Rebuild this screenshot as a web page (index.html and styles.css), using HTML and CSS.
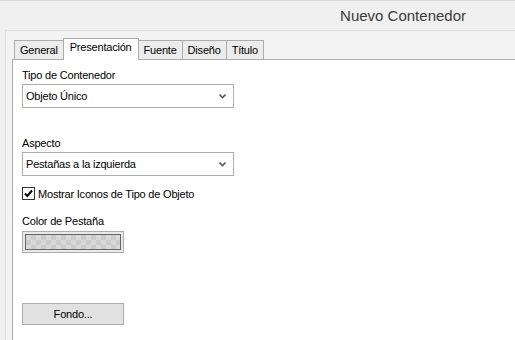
FILE: index.html
```html
<!DOCTYPE html>
<html lang="es">
<head>
    <meta charset="UTF-8">
    <title>Nuevo Contenedor</title>
    <link rel="stylesheet" href="styles.css">
</head>
<body>
    <div class="dialog">
        <div class="dialog-title">Nuevo Contenedor</div>

        <div class="panel">
            <div class="tabs">
                <span class="tab">General</span>
                <span class="tab tab-active">Presentación</span>
                <span class="tab">Fuente</span>
                <span class="tab">Diseño</span>
                <span class="tab">Título</span>
            </div>

            <div class="tabpage">
                <div class="label">Tipo de Contenedor</div>
                <div class="select">
                    <span>Objeto Único</span>
                    <svg class="chevron" width="7" height="5" viewBox="0 0 7 5">
                        <path d="M0.5 0.5 L3.5 3.5 L6.5 0.5" fill="none" stroke="#5f5f5f" stroke-width="1.6"/>
                    </svg>
                </div>

                <div class="label label-aspecto">Aspecto</div>
                <div class="select">
                    <span>Pestañas a la izquierda</span>
                    <svg class="chevron" width="7" height="5" viewBox="0 0 7 5">
                        <path d="M0.5 0.5 L3.5 3.5 L6.5 0.5" fill="none" stroke="#5f5f5f" stroke-width="1.6"/>
                    </svg>
                </div>

                <label class="check">
                    <span class="checkbox">
                        <svg width="11" height="11" viewBox="0 0 11 11">
                            <path d="M2 5.5 L4.3 8 L9 2.5" fill="none" stroke="#000" stroke-width="2"/>
                        </svg>
                    </span>
                    Mostrar Iconos de Tipo de Objeto
                </label>

                <div class="label label-color">Color de Pestaña</div>
                <div class="swatch">
                    <div class="swatch-inner"></div>
                </div>

                <div class="button">Fondo...</div>
            </div>
        </div>
    </div>
</body>
</html>
```

FILE: styles.css
```css
body {
    margin: 0;
    background-color: #f0f0f0;
    font-family: "Liberation Sans", Arial, sans-serif;
    font-size: 11px;
    letter-spacing: -0.2px;
    color: #000;
}

/* ventana */
.dialog {
    height: 340px;
    border-top: 1px solid #dadada;
    box-sizing: border-box;
    overflow: hidden;
}

.dialog-title {
    height: 29px;
    box-sizing: border-box;
    padding: 6px 49px 0 0;
    text-align: right;
    font-size: 15px;
    letter-spacing: 0;
    color: #3a3a3a;
}

/* marco exterior */
.panel {
    margin-left: 5px;
    padding: 8px 0 0 6px;
    border-top: 1px solid #dcdcdc;
    border-left: 1px solid #dcdcdc;
    background-color: #f3f3f3;
    height: 320px;
}

/* pestañas */
.tabs {
    display: flex;
    align-items: flex-end;
    padding-left: 2px;
    height: 20px;
    position: relative;
    z-index: 1;
}

.tab {
    height: 18px;
    line-height: 19px;
    padding: 0 5px;
    border: 1px solid #acacac;
    border-bottom: none;
    background-color: #ececec;
    margin-left: -1px;
}

.tab:first-child {
    margin-left: 0;
}

.tab-active {
    height: 21px;
    line-height: 17px;
    margin-bottom: -1px;
    padding: 0 6px;
    background-color: #fff;
}

/* contenido de la pestaña */
.tabpage {
    border-top: 1px solid #acacac;
    border-left: 1px solid #acacac;
    background-color: #fff;
    padding: 9px 0 0 9px;
    height: 300px;
}

.label {
    line-height: 13px;
    height: 13px;
}

.label-aspecto {
    margin-top: 29px;
}

.label-color {
    margin-top: 15px;
}

.select {
    width: 200px;
    height: 22px;
    border: 1px solid #acacac;
    display: flex;
    align-items: center;
    justify-content: space-between;
    padding: 0 7px 0 3px;
    margin-top: 2px;
}

.chevron {
    display: block;
}

.check {
    display: flex;
    align-items: center;
    gap: 3px;
    margin-top: 11px;
    height: 13px;
}

.checkbox {
    width: 11px;
    height: 11px;
    border: 1px solid #333;
    background-color: #fff;
    display: block;
}

.checkbox svg {
    display: block;
}

.swatch {
    width: 96px;
    height: 16px;
    border: 1px solid #adadad;
    background-color: #e9e9e9;
    padding: 2px;
    margin-top: 3px;
}

.swatch-inner {
    height: 14px;
    border: 1px solid #646464;
    background-color: #d9d9d9;
    background-image:
        linear-gradient(45deg, #cbcbcb 25%, transparent 25%, transparent 75%, #cbcbcb 75%),
        linear-gradient(45deg, #cbcbcb 25%, transparent 25%, transparent 75%, #cbcbcb 75%);
    background-size: 10px 10px;
    background-position: 0 0, 5px 5px;
}

.button {
    width: 100px;
    height: 20px;
    line-height: 20px;
    margin-top: 50px;
    border: 1px solid #adadad;
    background-color: #e1e1e1;
    text-align: center;
}
```
